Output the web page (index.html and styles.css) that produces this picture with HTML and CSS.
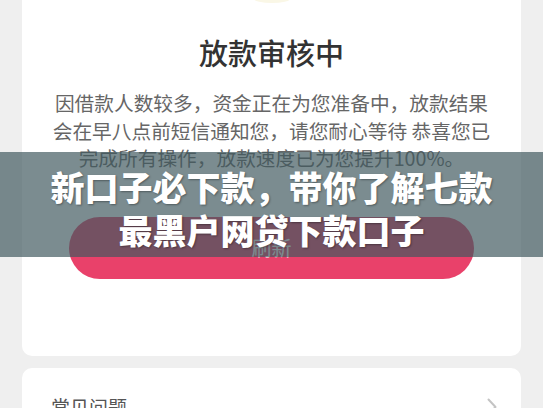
FILE: index.html
```html
<!DOCTYPE html>
<html lang="zh-CN">
<head>
  <meta charset="UTF-8" />
  <title>放款审核中</title>
  <link rel="stylesheet" href="styles.css">
</head>
<body>

<div class="page">
  <div class="card card-main">
    <div class="status-icon"></div>
    <h2 class="title">放款审核中</h2>
    <p class="desc">
      因借款人数较多，资金正在为您准备中，放款结果<br>
      会在早八点前短信通知您，请您耐心等待 恭喜您已<br>
      完成所有操作，放款速度已为您提升100%。
    </p>
    <button class="refresh-btn">刷新</button>
  </div>

  <div class="card card-faq">
    <span class="faq-label">常见问题</span>
    <svg class="chevron" width="10" height="18" viewBox="0 0 10 18">
      <path d="M1.5 1.5 L8.5 9 L1.5 16.5" fill="none" stroke="#c4c4c4" stroke-width="2" stroke-linecap="round" stroke-linejoin="round"/>
    </svg>
  </div>
</div>

<div class="banner">
  新口子必下款，带你了解七款<br>
  最黑户网贷下款口子
</div>

</body>
</html>
```

FILE: styles.css
```css
body {
  margin: 0;
  background: #efefef;
  font-family: "Noto Sans CJK SC", "Noto Sans", sans-serif;
  overflow: hidden;
}
.page {
  padding: 0 22px;
  margin-top: -40px;
}
.card {
  background: #fff;
  border-radius: 10px;
}
.card-main {
  padding: 0 0 77px;
  text-align: center;
}
.status-icon {
  width: 36px;
  height: 43px;
  margin: 0 auto;
  border-radius: 0 0 18px 18px / 0 0 4px 4px;
  background: #faf7e6;
}
.title {
  margin: 29px 0 0;
  font-size: 29px;
  line-height: 40px;
  font-weight: 500;
  color: #333;
}
.desc {
  margin: 17px 0 0;
  font-size: 19.7px;
  line-height: 27.5px;
  color: #666;
  white-space: nowrap;
}
.refresh-btn {
  display: block;
  width: 405px;
  height: 62px;
  margin: 45px auto 0;
  border: none;
  border-radius: 31px;
  background: #e9416a;
  color: #fff;
  font-family: inherit;
  font-size: 20px;
}
.card-faq {
  margin-top: 12px;
  padding: 25px 24px 20px 29px;
  display: flex;
  align-items: center;
  justify-content: space-between;
}
.faq-label {
  font-size: 19px;
  line-height: 28px;
  color: #555;
}
.chevron {
  display: block;
}
.banner {
  position: absolute;
  top: 152px;
  left: 0;
  right: 0;
  height: 105px;
  box-sizing: border-box;
  padding-top: 13px;
  background: rgba(64, 88, 94, 0.69);
  color: #fff;
  text-align: center;
  font-size: 34px;
  line-height: 43px;
  font-weight: 900;
  text-shadow: 1px 1px 2px rgba(0, 0, 0, 0.35);
}
```
